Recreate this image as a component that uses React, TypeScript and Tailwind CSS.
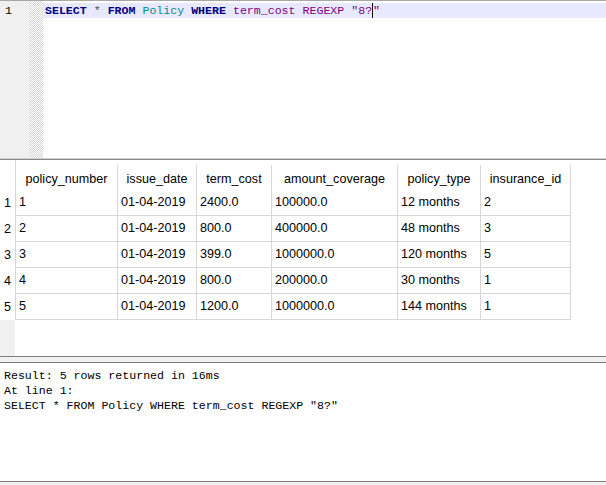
const mono = "font-['Liberation_Mono','Courier_New',monospace]";

const columns = [
  { name: "policy_number", w: "w-[102px]" },
  { name: "issue_date", w: "w-[79px]" },
  { name: "term_cost", w: "w-[75px]" },
  { name: "amount_coverage", w: "w-[126px]" },
  { name: "policy_type", w: "w-[83px]" },
  { name: "insurance_id", w: "w-[90px]" },
];

const rows = [
  ["1", "01-04-2019", "2400.0", "100000.0", "12 months", "2"],
  ["2", "01-04-2019", "800.0", "400000.0", "48 months", "3"],
  ["3", "01-04-2019", "399.0", "1000000.0", "120 months", "5"],
  ["4", "01-04-2019", "800.0", "200000.0", "30 months", "1"],
  ["5", "01-04-2019", "1200.0", "1000000.0", "144 months", "1"],
];

function Editor() {
  return (
    <div className="h-[158px] flex border-t border-[#a8a8a8] shrink-0">
      <div className="w-[29px] bg-[#f0f0f0] pt-[2px]">
        <div className={`${mono} text-[11.6px] leading-[15px] pl-[5px] text-black`}>1</div>
      </div>
      <div className="w-[14px] bg-[repeating-conic-gradient(#d6d6d6_0_25%,#ffffff_0_50%)] bg-[length:2px_2px]" />
      <div className="flex-1 pt-[2px]">
        <div className={`${mono} h-[15px] bg-[#e8e8ff] pl-[2px] text-[11.6px] leading-[15px] whitespace-pre flex items-center`}>
          <span className="font-bold text-[#000080]">SELECT</span>
          <span className="text-[#505050]"> * </span>
          <span className="font-bold text-[#000080]">FROM</span>
          <span> </span>
          <span className="text-[#008b8b]">Policy</span>
          <span> </span>
          <span className="font-bold text-[#000080]">WHERE</span>
          <span> </span>
          <span className="text-[#800080]">term_cost</span>
          <span> </span>
          <span className="text-[#800080]">REGEXP</span>
          <span> </span>
          <span className="text-[#800080]">"8?</span>
          <span className="w-px h-[15px] bg-black" />
          <span className="text-[#800080]">"</span>
        </div>
      </div>
    </div>
  );
}

function ResultGrid() {
  return (
    <div className="h-[196px] flex flex-col shrink-0 text-[12.6px] text-black font-['Liberation_Sans',Arial,sans-serif]">
      <div className="flex h-[30px]">
        <div className="w-[16px] border-r border-[#d6d6d6]" />
        {columns.map((c) => (
          <div
            key={c.name}
            className={`${c.w} mt-[5px] h-[25px] pt-[4px] border-r border-[#d6d6d6] flex items-center justify-center`}
          >
            {c.name}
          </div>
        ))}
      </div>
      {rows.map((r, i) => (
        <div key={i} className="flex h-[26px]">
          <div className="w-[16px] border-r border-[#d6d6d6] flex items-center justify-center">
            {i + 1}
          </div>
          {r.map((v, j) => (
            <div
              key={j}
              className={`${columns[j].w} border-r border-b border-[#d6d6d6] flex items-center pl-[3px]`}
            >
              {v}
            </div>
          ))}
        </div>
      ))}
      <div className="flex-1 flex">
        <div className="w-[15px] bg-[#f0f0f0]" />
      </div>
    </div>
  );
}

export default function App() {
  return (
    <div className="w-[606px] h-[485px] bg-white overflow-hidden flex flex-col">
      <Editor />
      <div className="h-[2px] border-t border-b border-t-[#cfcfcf] border-b-[#8a8a8a] shrink-0" />
      <ResultGrid />
      <div className="h-[7px] border-t border-b border-[#7f7f7f] bg-[#f0f0f0] shrink-0" />
      <div className={`${mono} h-[118px] pt-[5px] px-[4px] text-[11.6px] leading-[15px] text-black whitespace-pre shrink-0`}>
        <div>Result: 5 rows returned in 16ms</div>
        <div>At line 1:</div>
        <div>SELECT * FROM Policy WHERE term_cost REGEXP "8?"</div>
      </div>
      <div className="h-px bg-[#7f7f7f] shrink-0" />
      <div className="flex-1 bg-[#f0f0f0]" />
    </div>
  );
}
